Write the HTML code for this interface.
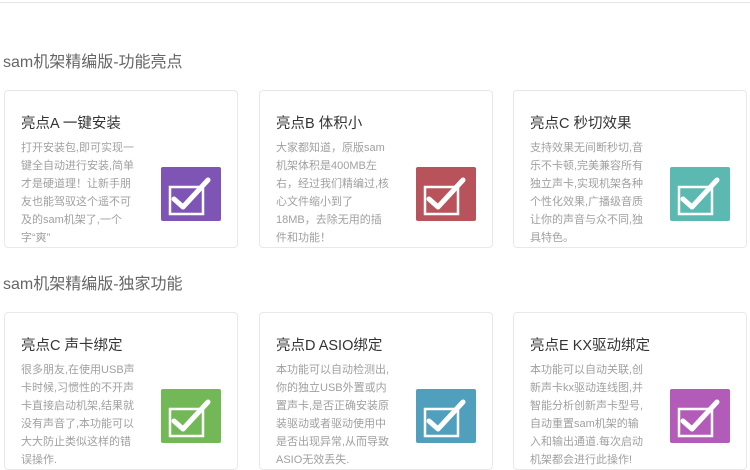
<!DOCTYPE html>
<html><head><meta charset="utf-8">
<style>
*{margin:0;padding:0;box-sizing:border-box}
body{width:750px;height:470px;overflow:hidden;background:#fff;font-family:"Liberation Sans","Noto Sans CJK SC",sans-serif;position:relative}
.topline{position:absolute;left:0;top:0;width:750px;height:3px;border-bottom:1px solid #e6e6e6}
h2{position:absolute;left:3px;font-size:16px;font-weight:normal;color:#666}
.card{position:absolute;width:234px;height:158px;border:1px solid #e8e8e8;border-radius:4px;background:#fff}
.card h3{position:absolute;left:16px;top:21px;font-size:14.5px;font-weight:normal;color:#333;white-space:nowrap}
.card p{position:absolute;left:16px;top:48px;font-size:11px;line-height:18px;color:#a0a0a0;white-space:nowrap}
.card svg{position:absolute;left:156px;top:76px}
</style></head><body>
<div class="topline"></div>
<h2 style="top:48px">sam机架精编版-功能亮点</h2>
<div class="card" style="left:4px;top:90px"><h3>亮点A 一键安装</h3><p>打开安装包,即可实现一<br>键全自动进行安装,简单<br>才是硬道理！让新手朋<br>友也能驾驭这个遥不可<br>及的sam机架了,一个<br>字“爽”</p>
<svg width="60" height="54" viewBox="0 0 60 54"><rect width="60" height="54" rx="2" fill="#7e55b5"/><rect x="9" y="20" width="33" height="27" fill="none" stroke="#fff" stroke-width="2.5"/><path d="M13 32 L22 40 L47 13" fill="none" stroke="#fff" stroke-width="5" stroke-linecap="round" stroke-linejoin="round"/></svg></div>
<div class="card" style="left:259px;top:90px"><h3>亮点B 体积小</h3><p>大家都知道，原版sam<br>机架体积是400MB左<br>右，经过我们精编过,核<br>心文件缩小到了<br>18MB，去除无用的插<br>件和功能！</p>
<svg width="60" height="54" viewBox="0 0 60 54"><rect width="60" height="54" rx="2" fill="#b9535b"/><rect x="9" y="20" width="33" height="27" fill="none" stroke="#fff" stroke-width="2.5"/><path d="M13 32 L22 40 L47 13" fill="none" stroke="#fff" stroke-width="5" stroke-linecap="round" stroke-linejoin="round"/></svg></div>
<div class="card" style="left:513px;top:90px"><h3>亮点C 秒切效果</h3><p>支持效果无间断秒切,音<br>乐不卡顿,完美兼容所有<br>独立声卡,实现机架各种<br>个性化效果,广播级音质<br>让你的声音与众不同,独<br>具特色。</p>
<svg width="60" height="54" viewBox="0 0 60 54"><rect width="60" height="54" rx="2" fill="#5bb9b1"/><rect x="9" y="20" width="33" height="27" fill="none" stroke="#fff" stroke-width="2.5"/><path d="M13 32 L22 40 L47 13" fill="none" stroke="#fff" stroke-width="5" stroke-linecap="round" stroke-linejoin="round"/></svg></div>
<h2 style="top:270px">sam机架精编版-独家功能</h2>
<div class="card" style="left:4px;top:312px"><h3>亮点C 声卡绑定</h3><p>很多朋友,在使用USB声<br>卡时候,习惯性的不开声<br>卡直接启动机架,结果就<br>没有声音了,本功能可以<br>大大防止类似这样的错<br>误操作.</p>
<svg width="60" height="54" viewBox="0 0 60 54"><rect width="60" height="54" rx="2" fill="#72b856"/><rect x="9" y="20" width="33" height="27" fill="none" stroke="#fff" stroke-width="2.5"/><path d="M13 32 L22 40 L47 13" fill="none" stroke="#fff" stroke-width="5" stroke-linecap="round" stroke-linejoin="round"/></svg></div>
<div class="card" style="left:259px;top:312px"><h3>亮点D ASIO绑定</h3><p>本功能可以自动检测出,<br>你的独立USB外置或内<br>置声卡,是否正确安装原<br>装驱动或者驱动使用中<br>是否出现异常,从而导致<br>ASIO无效丢失.</p>
<svg width="60" height="54" viewBox="0 0 60 54"><rect width="60" height="54" rx="2" fill="#509fbd"/><rect x="9" y="20" width="33" height="27" fill="none" stroke="#fff" stroke-width="2.5"/><path d="M13 32 L22 40 L47 13" fill="none" stroke="#fff" stroke-width="5" stroke-linecap="round" stroke-linejoin="round"/></svg></div>
<div class="card" style="left:513px;top:312px"><h3>亮点E KX驱动绑定</h3><p>本功能可以自动关联,创<br>新声卡kx驱动连线图,并<br>智能分析创新声卡型号,<br>自动重置sam机架的输<br>入和输出通道.每次启动<br>机架都会进行此操作!</p>
<svg width="60" height="54" viewBox="0 0 60 54"><rect width="60" height="54" rx="2" fill="#b35bb8"/><rect x="9" y="20" width="33" height="27" fill="none" stroke="#fff" stroke-width="2.5"/><path d="M13 32 L22 40 L47 13" fill="none" stroke="#fff" stroke-width="5" stroke-linecap="round" stroke-linejoin="round"/></svg></div>
</body></html>
